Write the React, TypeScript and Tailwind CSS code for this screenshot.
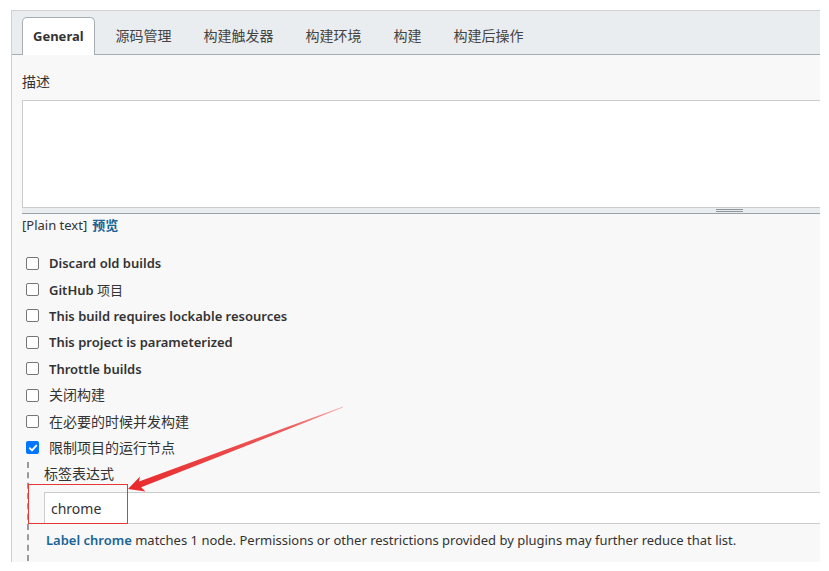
import React from "react";

const font = { fontFamily: '"Noto Sans", "Noto Sans CJK SC", sans-serif' };

function Box({ checked }: { checked?: boolean }) {
  if (checked) {
    return (
      <span className="flex h-[13px] w-[13px] items-center justify-center rounded-[2px] bg-[#0075ff]">
        <svg width="10" height="10" viewBox="0 0 10 10">
          <path d="M1.8 5.2 L4 7.4 L8.3 2.6" fill="none" stroke="#fff" strokeWidth="1.9" strokeLinecap="round" strokeLinejoin="round" />
        </svg>
      </span>
    );
  }
  return <span className="block h-[13px] w-[13px] rounded-[2px] border border-[#767676] bg-white" />;
}

const rows: { label: string; cn?: string; bold?: boolean; checked?: boolean }[] = [
  { label: "Discard old builds", bold: true },
  { label: "GitHub", cn: " 项目", bold: true },
  { label: "This build requires lockable resources", bold: true },
  { label: "This project is parameterized", bold: true },
  { label: "Throttle builds", bold: true },
  { label: "关闭构建" },
  { label: "在必要的时候并发构建" },
  { label: "限制项目的运行节点", checked: true },
];

const tabs = ["源码管理", "构建触发器", "构建环境", "构建", "构建后操作"];

export default function App() {
  return (
    <div className="relative h-[571px] w-[829px] overflow-hidden bg-white text-[#333]" style={font}>
      <div className="ml-[11px] mt-[10px] h-[552px] w-[809px] border-l border-t border-[#cfd3d6] bg-[#f8f8f8]">
        {/* tab bar */}
        <div className="flex h-[44px] items-end border-b border-[#a6adb3] bg-[#e9edf0] pl-[10px]">
          <div className="-mb-px flex h-[38px] items-center rounded-t-[5px] border border-b-0 border-[#a6adb3] bg-white px-[10px] text-[13px] font-bold">
            General
          </div>
          <div className="ml-[5px] flex h-[37px]">
            {tabs.map((t) => (
              <div key={t} className="flex items-center px-4 text-[14px] text-[#444]">
                {t}
              </div>
            ))}
          </div>
        </div>

        {/* content */}
        <div className="pl-[10px]">
          <div className="flex h-[45px] items-end pb-[8px] text-[14px]">描述</div>
          <div className="h-[108px] border border-[#cccccc] border-r-0 bg-white" />
          <div className="relative h-[6px] border-b border-[#9aa3a9] bg-[#e9edf0]">
            <div className="absolute left-[694px] top-[1px] h-[1px] w-[27px] bg-[#8e969c]" />
            <div className="absolute left-[694px] top-[3px] h-[1px] w-[27px] bg-[#8e969c]" />
          </div>
          <div className="flex h-[24px] items-center text-[13px]">
            <span>[Plain text]</span>
            <span className="ml-[5px] font-bold text-[#1a6496]">预览</span>
          </div>
          <div className="mt-[12px] flex flex-col">
            {rows.map((r) => (
              <div key={r.label} className="flex h-[26.4px] items-center">
                <span className="ml-[4px] mr-[10px]">
                  <Box checked={r.checked} />
                </span>
                {r.bold ? (
                  <span className="text-[13px] leading-[18px] font-semibold">
                    {r.label}
                    {r.cn ? <span className="font-normal">{r.cn}</span> : null}
                  </span>
                ) : (
                  <span className="text-[14px] leading-[18px]">{r.label}</span>
                )}
              </div>
            ))}
          </div>
          {/* nested section */}
          <div className="ml-[5px] mt-[1px] border-l-2 border-dashed border-[#9a9a9a] pb-[10px] pl-[15px]">
            <div className="flex h-[22px] items-center text-[14px]">标签表达式</div>
            <div className="mt-[8px] flex h-[32px] items-center border border-r-0 border-[#cccccc] bg-white pl-[6px] text-[14px]">
              chrome
            </div>
            <div className="mt-[7px] pl-[2px] text-[13px]">
              <span className="font-semibold text-[#1a6496]">Label chrome</span> matches 1 node. Permissions or other restrictions provided by plugins may further reduce that list.
            </div>
          </div>
        </div>
      </div>

      {/* annotation: red box */}
      <div className="absolute left-[28px] top-[484px] h-[40px] w-[100px] border border-[#e53935]" />
      {/* annotation: arrow */}
      <svg className="absolute left-0 top-0" width="829" height="571" viewBox="0 0 829 571">
        <defs>
          <linearGradient id="ag" x1="343" y1="407" x2="128" y2="489" gradientUnits="userSpaceOnUse">
            <stop offset="0" stopColor="#f6b3b3" />
            <stop offset="0.25" stopColor="#ee5a5a" />
            <stop offset="1" stopColor="#e8292b" />
          </linearGradient>
        </defs>
        <polygon
          points="343.2,406.4 139,481.4 140,476.5 128,489 145.5,491.6 141.2,487.3 342.9,407.6"
          fill="url(#ag)"
        />
      </svg>
    </div>
  );
}
